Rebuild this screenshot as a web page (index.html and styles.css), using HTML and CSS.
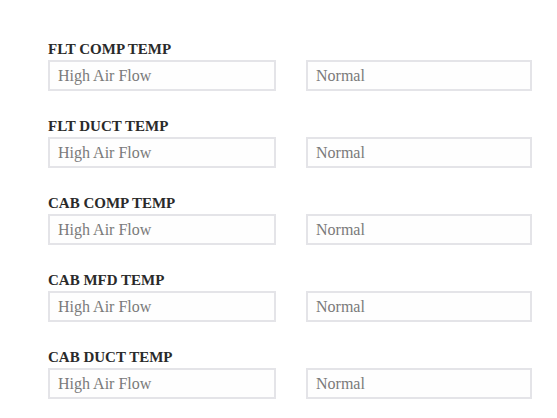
FILE: index.html
```html
<!DOCTYPE html>
<html>
<head>
<meta charset="utf-8">
<link rel="stylesheet" href="styles.css">
</head>
<body>
<div class="form">
  <div class="group">
    <div class="label">FLT COMP TEMP</div>
    <div class="row">
      <input class="field" placeholder="High Air Flow">
      <input class="field" placeholder="Normal">
    </div>
  </div>
  <div class="group">
    <div class="label">FLT DUCT TEMP</div>
    <div class="row">
      <input class="field" placeholder="High Air Flow">
      <input class="field" placeholder="Normal">
    </div>
  </div>
  <div class="group">
    <div class="label">CAB COMP TEMP</div>
    <div class="row">
      <input class="field" placeholder="High Air Flow">
      <input class="field" placeholder="Normal">
    </div>
  </div>
  <div class="group">
    <div class="label">CAB MFD TEMP</div>
    <div class="row">
      <input class="field" placeholder="High Air Flow">
      <input class="field" placeholder="Normal">
    </div>
  </div>
  <div class="group">
    <div class="label">CAB DUCT TEMP</div>
    <div class="row">
      <input class="field" placeholder="High Air Flow">
      <input class="field" placeholder="Normal">
    </div>
  </div>
</div>
</body>
</html>
```
FILE: styles.css
```css
html, body {
  margin: 0;
  padding: 0;
  background: #ffffff;
}
body {
  font-family: "Liberation Serif", "DejaVu Serif", serif;
}
.form {
  padding: 40px 0 0 48px;
  display: flex;
  flex-direction: column;
  gap: 26px;
}
.group {
  display: flex;
  flex-direction: column;
}
.label {
  font-size: 15px;
  font-weight: bold;
  color: #2a2a2a;
  height: 20px;
  line-height: 18px;
}
.row {
  display: flex;
  gap: 30px;
}
.field {
  box-sizing: border-box;
  width: 228px;
  height: 31px;
  margin: 0;
  border: 2px solid #e4e4e8;
  background: #fefefe;
  padding: 0 8px;
  font-family: "Liberation Serif", "DejaVu Serif", serif;
  font-size: 16px;
  color: #555;
  outline: none;
}
.field::placeholder {
  color: #7a7a7a;
  opacity: 1;
}
.field + .field {
  width: 226px;
}
```
